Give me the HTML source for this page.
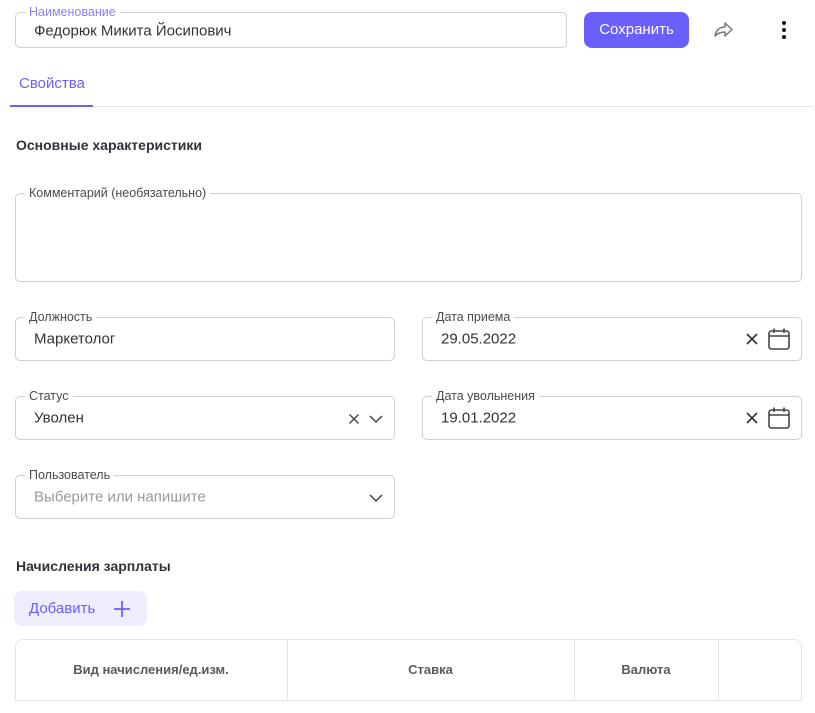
<!DOCTYPE html>
<html><head><meta charset="utf-8"><style>
*{box-sizing:border-box;margin:0;padding:0}
body{width:815px;height:713px;background:#fff;font-family:"Liberation Sans",sans-serif;position:relative;overflow:hidden;color:#2b2b2b}
.f{position:absolute;border:1px solid #cfcfd4;border-radius:5px}
.lab{position:absolute;top:-8px;left:9px;background:#fff;padding:0 4px;font-size:12.5px;color:#4a4a4a;line-height:14px}
.val{position:absolute;left:18px;top:50%;transform:translateY(-50%);font-size:15px;color:#333}
.h{position:absolute;left:16px;font-size:14px;font-weight:bold;color:#2f3337}
.ic{position:absolute}
</style></head><body>
<div class="f" style="left:15px;top:12px;width:552px;height:36px"><span class="lab" style="color:#8a80f5;top:-8px">Наименование</span><span class="val" style="top:18px">Федорюк Микита Йосипович</span></div>
<div style="position:absolute;left:584px;top:12px;width:105px;height:36px;background:#6a5ff9;border-radius:8px;color:#fff;font-size:15px;line-height:36px;text-align:center">Сохранить</div>
<svg class="ic" style="left:712px;top:20px" width="22" height="20" viewBox="0 0 22 20"><path d="M3 16 C4 10 8 7 13 7 V3 L20 9.5 L13 16 V12 C9 12 6 13 3 16Z" fill="none" stroke="#777" stroke-width="1.5" stroke-linejoin="round"/></svg>
<svg class="ic" style="left:780px;top:20px" width="8" height="20"><circle cx="4" cy="3" r="2" fill="#111"/><circle cx="4" cy="10" r="2" fill="#111"/><circle cx="4" cy="17" r="2" fill="#111"/></svg>
<div style="position:absolute;left:19px;top:75px;font-size:15px;color:#6a5ff9">Свойства</div>
<div style="position:absolute;left:10px;top:106px;width:803px;height:1px;background:#e4e4e8"></div>
<div style="position:absolute;left:10px;top:105px;width:83px;height:2px;background:#6a5ff9"></div>
<div class="h" style="top:137px">Основные характеристики</div>
<div class="f" style="left:15px;top:193px;width:787px;height:89px"><span class="lab">Комментарий (необязательно)</span></div>
<div class="f" style="left:15px;top:317px;width:380px;height:44px"><span class="lab">Должность</span><span class="val">Маркетолог</span></div>
<div class="f" style="left:422px;top:317px;width:380px;height:44px"><span class="lab">Дата приема</span><span class="val">29.05.2022</span>
<svg class="ic" style="left:322px;top:14px" width="14" height="14"><path d="M2 2L12 12M12 2L2 12" stroke="#333" stroke-width="1.6"/></svg>
<svg class="ic" style="left:344px;top:9px" width="24" height="24"><rect x="2" y="4" width="20" height="18" rx="2.5" fill="none" stroke="#444" stroke-width="1.6"/><path d="M2 9H22M7 1.5V6M17 1.5V6" stroke="#444" stroke-width="1.6"/></svg></div>
<div class="f" style="left:15px;top:396px;width:380px;height:44px"><span class="lab">Статус</span><span class="val">Уволен</span>
<svg class="ic" style="left:332px;top:16px" width="12" height="12"><path d="M1.5 1.5L10.5 10.5M10.5 1.5L1.5 10.5" stroke="#444" stroke-width="1.4"/></svg>
<svg class="ic" style="left:352px;top:16px" width="16" height="12"><path d="M2 3L8 9L14 3" fill="none" stroke="#444" stroke-width="1.5"/></svg></div>
<div class="f" style="left:422px;top:396px;width:380px;height:44px"><span class="lab">Дата увольнения</span><span class="val">19.01.2022</span>
<svg class="ic" style="left:322px;top:14px" width="14" height="14"><path d="M2 2L12 12M12 2L2 12" stroke="#333" stroke-width="1.6"/></svg>
<svg class="ic" style="left:344px;top:9px" width="24" height="24"><rect x="2" y="4" width="20" height="18" rx="2.5" fill="none" stroke="#444" stroke-width="1.6"/><path d="M2 9H22M7 1.5V6M17 1.5V6" stroke="#444" stroke-width="1.6"/></svg></div>
<div class="f" style="left:15px;top:475px;width:380px;height:44px"><span class="lab">Пользователь</span><span class="val" style="color:#9a9a9a">Выберите или напишите</span>
<svg class="ic" style="left:352px;top:16px" width="16" height="12"><path d="M2 3L8 9L14 3" fill="none" stroke="#444" stroke-width="1.5"/></svg></div>
<div class="h" style="top:558px">Начисления зарплаты</div>
<div style="position:absolute;left:14px;top:591px;width:133px;height:35px;background:#eeedfd;border-radius:8px;color:#6a5ff9;font-size:15px;line-height:35px;padding-left:15px">Добавить</div>
<svg class="ic" style="left:113px;top:600px" width="18" height="18"><path d="M9 1V17M1 9H17" stroke="#6a5ff9" stroke-width="1.8"/></svg>
<div style="position:absolute;left:15px;top:639px;width:787px;height:62px;border:1px solid #e6e6ea;border-radius:8px 8px 0 0;border-right:1px solid #e6e6ea"></div>
<div style="position:absolute;left:287px;top:640px;width:1px;height:61px;background:#e6e6ea"></div>
<div style="position:absolute;left:574px;top:640px;width:1px;height:61px;background:#e6e6ea"></div>
<div style="position:absolute;left:718px;top:640px;width:1px;height:61px;background:#e6e6ea"></div>
<div style="position:absolute;left:15px;top:662px;width:272px;text-align:center;font-size:13px;font-weight:bold;color:#5a5a5a">Вид начисления/ед.изм.</div>
<div style="position:absolute;left:287px;top:662px;width:287px;text-align:center;font-size:13px;font-weight:bold;color:#5a5a5a">Ставка</div>
<div style="position:absolute;left:574px;top:662px;width:144px;text-align:center;font-size:13px;font-weight:bold;color:#5a5a5a">Валюта</div>
</body></html>
